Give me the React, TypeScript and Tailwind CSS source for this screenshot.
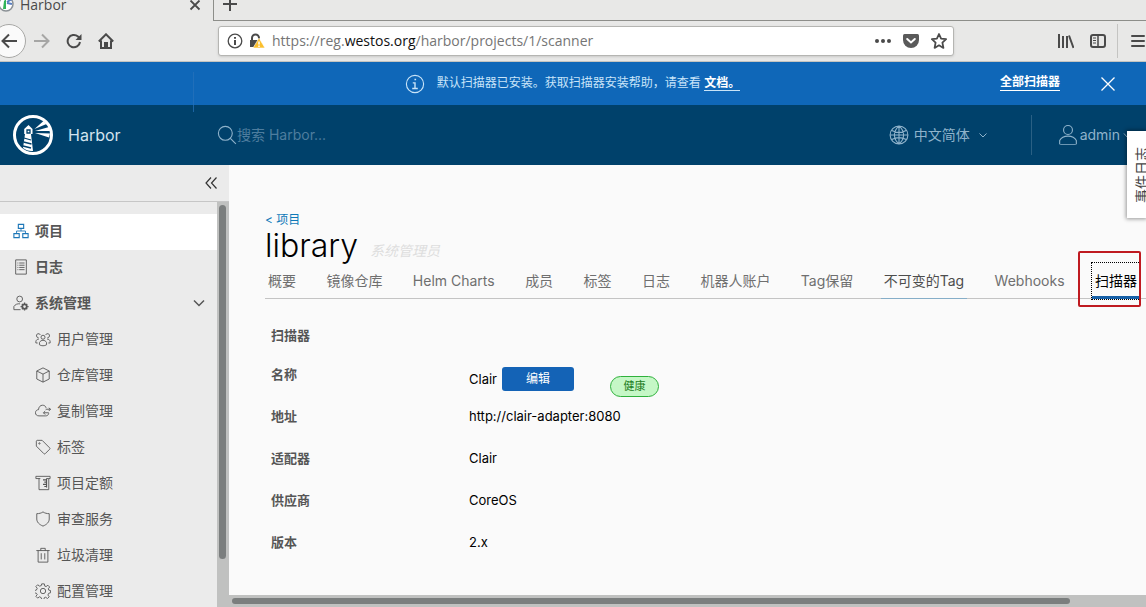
import { useState } from "react";

interface IconProps {
    className?: string;
    children: React.ReactNode;
}

function Icon({ className = "h-4 w-4", children }: IconProps) {
    return (
        <svg xmlns="http://www.w3.org/2000/svg" viewBox="0 0 36 36" fill="none" stroke="currentColor" strokeWidth="2" className={`shrink-0 ${className}`} aria-hidden="true">
            {children}
        </svg>
    );
}

const navIcons = {
    projects: (
        <>
            <path d="M12 3h12v9H12zM2 24h12v9H2zM22 24h12v9H22z" strokeWidth="2.5" />
            <path d="M18 12v6M8 24v-6h20v6" />
        </>
    ),
    logs: (
        <>
            <path d="M6 2h24v32H6z" />
            <path d="M10 9h2M14 9h12M10 14h2M14 14h12M10 19h2M14 19h12M10 24h2M14 24h12" />
        </>
    ),
    admin: (
        <>
            <circle cx="15" cy="9" r="6.5" />
            <path d="M17 33H2v-7c3-5 8-7 14-6" />
            <circle cx="26" cy="26" r="5" strokeWidth="4" />
            <path d="M26 17v3M26 32v3M17 26h3M32 26h3M20 20l2 2M30 30l2 2M32 20l-2 2M22 30l-2 2" strokeWidth="3" />
        </>
    ),
    users: (
        <>
            <circle cx="18" cy="14" r="4.5" />
            <path d="M10 31v-5c2-4 5-5 8-5s6 1 8 5v5c-5 3-11 3-16 0z" />
            <path d="M12 9a4.500 4.500 0 1 0-4 6M24 9a4.500 4.500 0 1 1 4 6M9 18c-4 0-6 2-7 5v4h4M27 18c4 0 6 2 7 5v4h-4" />
        </>
    ),
    registry: <path d="M18 2l14 7v18l-14 7-14-7V9zM4 9l14 7 14-7M18 16v18" />,
    replication: (
        <>
            <path d="M31 23c-1 4-3 6-7 6H9c-5 0-8-3-8-7s3-7 7-7c0-6 4-10 9-10 4 0 7 2 8 6" />
            <path d="M35 14H24M31 11l4 3-4 4M31 22H19M23 18l-4 4 4 4" />
        </>
    ),
    tag: (
        <>
            <path d="M3 5v11l17 17c1 1 2 1 3 0l10-10c1-1 1-2 0-3L16 3H5C4 3 3 4 3 5z" />
            <circle cx="10" cy="10" r="1.500" />
        </>
    ),
    quota: (
        <>
            <path d="M2 3h32v5h-3v25H9V8H2zM9 8h3M26 8h5" />
            <path d="M26 8v20M18 11h8M21 16h5M18 21h8M21 26h5" strokeWidth="2.5" />
        </>
    ),
    shield: <path d="M18 2c4 3 9 4 14 4v12c0 7-5 12-14 16C9 30 4 25 4 18V6c5 0 10-1 14-4z" />,
    trash: <path d="M3 8h30M7 8v26h22V8M13 8V3h10v5M14 14v14M22 14v14" />,
    settings: (
        <>
            <circle cx="18" cy="18" r="6" />
            <path d="M15 2h6l1 5 3 1 4-3 4 4-3 4 1 3 4 1v5l-4 1-2 4 3 4-4 4-4-3-3 1-1 4h-5l-1-4-4-2-4 3-4-4 3-4-2-3-5-1v-5l5-1 2-4-3-4 4-4 4 3 4-1z" />
        </>
    ),
};

type NavIcon = keyof typeof navIcons;

const adminItems: { label: string; icon: NavIcon }[] = [
    { label: "用户管理", icon: "users" },
    { label: "仓库管理", icon: "registry" },
    { label: "复制管理", icon: "replication" },
    { label: "标签", icon: "tag" },
    { label: "项目定额", icon: "quota" },
    { label: "审查服务", icon: "shield" },
    { label: "垃圾清理", icon: "trash" },
    { label: "配置管理", icon: "settings" },
];

const tabs = ["概要", "镜像仓库", "Helm Charts", "成员", "标签", "日志", "机器人账户", "Tag保留", "不可变的Tag", "Webhooks", "扫描器"];

const details = [
    { label: "地址", value: "http://clair-adapter:8080" },
    { label: "适配器", value: "Clair" },
    { label: "供应商", value: "CoreOS" },
    { label: "版本", value: "2.x" },
];

function BrowserChrome() {
    return (
        <div className="shrink-0 bg-[#e8e8e7] font-['Open_Sans',sans-serif] text-[#4a4a4a]">
            <div className="flex h-[21px]">
                <div className="flex w-[214px] items-start border-r border-[#8d8e8a] pr-3">
                    <svg viewBox="0 0 16 16" className="-ml-0.5 -mt-1 h-4 w-4 shrink-0" aria-hidden="true">
                        <circle cx="8" cy="8" r="7" fill="#fff" stroke="#8b9196" strokeWidth="1.500" />
                        <path d="M6 5l2-2v10H5z" fill="#32b45a" />
                        <path d="M9 6l5-3M9 7l5 1" stroke="#5a7fc0" strokeWidth="2" />
                    </svg>
                    <span className="-mt-[5px] ml-1.5 flex-1 text-sm leading-5">Harbor</span>
                    <button aria-label="Close tab" className="-mt-px">
                        <svg viewBox="0 0 12 12" className="h-3 w-3" stroke="currentColor" strokeWidth="1.800"><path d="M1.500 1.500l9 9M10.500 1.500l-9 9" /></svg>
                    </button>
                </div>
                <div className="flex flex-1 items-start border-b border-[#8d8e8a]">
                    <button aria-label="New tab" className="-mt-1 ml-2">
                        <svg viewBox="0 0 16 16" className="h-4 w-4" stroke="currentColor" strokeWidth="2"><path d="M8 1v14M1 8h14" /></svg>
                    </button>
                </div>
            </div>
            <div className="flex h-[41px] items-center border-b border-[#c4c4c0]">
                <button aria-label="Back" className="-ml-2 flex h-[34px] w-[34px] shrink-0 items-center justify-center rounded-full border border-[#a8a8a6] bg-[#fafafa]">
                    <svg viewBox="0 0 16 16" className="h-4 w-4" fill="none" stroke="currentColor" strokeWidth="2"><path d="M16 8H1.500M8 1.500L1.500 8 8 14.500" /></svg>
                </button>
                <button aria-label="Forward" className="ml-2 text-[#a6a6a5]">
                    <svg viewBox="0 0 16 16" className="h-4 w-4" fill="none" stroke="currentColor" strokeWidth="2"><path d="M0 8h14.500M8 1.500L14.500 8 8 14.500" /></svg>
                </button>
                <button aria-label="Reload" className="ml-4">
                    <svg viewBox="0 0 16 16" className="h-4 w-4" fill="none" stroke="currentColor" strokeWidth="2"><path d="M14 9a6.200 6.200 0 1 1-2-5.500L14 5.500" /><path d="M15.500 1v6h-6z" fill="currentColor" stroke="none" /></svg>
                </button>
                <button aria-label="Home" className="ml-4">
                    <svg viewBox="0 0 16 16" className="h-4 w-4" fill="none" stroke="currentColor" strokeWidth="2"><path d="M.8 8.500L8 1.300l7.200 7.200M3 7.500V15h10V7.500" /><path d="M6 9h4v6H6z" fill="currentColor" stroke="none" /></svg>
                </button>
                <div className="mx-[104px] flex h-[30px] flex-1 items-center rounded-[3px] border border-[#b5b5b2] bg-white pl-2 pr-1.5 shadow-sm">
                    <svg viewBox="0 0 16 16" className="h-4 w-4 shrink-0" fill="none" stroke="currentColor" aria-hidden="true"><circle cx="8" cy="8" r="6.800" strokeWidth="1.300" /><path d="M8 7v5M8 4v1.800" strokeWidth="2" /></svg>
                    <svg viewBox="0 0 16 16" className="ml-1.5 h-4 w-4 shrink-0" aria-hidden="true">
                        <path d="M3 7V5a3.500 3.500 0 0 1 7 0v2" fill="none" stroke="currentColor" strokeWidth="2" />
                        <path d="M1 7h10v7H1z" fill="currentColor" />
                        <path d="M10 5l6 10H4z" fill="#fbbf2d" stroke="#fff" strokeWidth=".6" />
                        <path d="M10 8.500v3M10 12.500V14" stroke="#fff" strokeWidth="1.500" />
                    </svg>
                    <span className="ml-[7px] flex-1 truncate text-sm text-[#757575]">
                        https://reg.<span className="text-[#111]">westos.org</span>/harbor/projects/1/scanner
                    </span>
                    <button aria-label="Page actions">
                        <svg viewBox="0 0 16 16" className="h-4 w-4" fill="currentColor"><circle cx="2" cy="8" r="2" /><circle cx="8" cy="8" r="2" /><circle cx="14" cy="8" r="2" /></svg>
                    </button>
                    <button aria-label="Pocket" className="ml-3">
                        <svg viewBox="0 0 16 16" className="h-4 w-4"><path d="M1.500 1h13Q16 1 16 2.500V7A8 8 0 0 1 0 7V2.500Q0 1 1.500 1z" fill="#5a5a5a" /><path d="M4.200 6L8 9.500 11.800 6" fill="none" stroke="#fff" strokeWidth="2" strokeLinecap="round" /></svg>
                    </button>
                    <button aria-label="Bookmark" className="ml-3">
                        <svg viewBox="0 0 16 16" className="h-4 w-4" fill="none" stroke="currentColor" strokeWidth="1.800" strokeLinejoin="round"><path d="M8 1l2.100 4.700 5 .5-3.700 3.500 1 5.200L8 12.300l-4.400 2.600 1-5.200L.9 6.200l5-.5z" /></svg>
                    </button>
                </div>
                <button aria-label="Library">
                    <svg viewBox="0 0 16 16" className="h-4 w-4" fill="none" stroke="currentColor" strokeWidth="2"><path d="M1 1v14M5 3v12M9 3v12M11 2.500L15.500 15" /></svg>
                </button>
                <button aria-label="Sidebars" className="ml-4">
                    <svg viewBox="0 0 16 16" className="h-4 w-4" fill="none" stroke="currentColor"><rect x="1" y="2" width="14" height="12" rx="2" strokeWidth="2" /><path d="M8 2v12" strokeWidth="1.500" /><path d="M3 5h3M3 7.500h3M3 10h3" /></svg>
                </button>
                <div className="ml-[11px] h-[34px] w-px bg-[#c4c4c2]"></div>
                <button aria-label="Menu" className="ml-3">
                    <svg viewBox="0 0 16 16" className="h-4 w-4" stroke="currentColor" strokeWidth="2" strokeLinecap="round"><path d="M2 3h12M2 8h12M2 13h12" /></svg>
                </button>
            </div>
        </div>
    );
}

function Banner() {
    return (
        <div className="relative flex h-[43px] shrink-0 items-center bg-[#0f67b8] pb-0.5 text-xs text-[#c9e4f8]">
            <div className="flex flex-1 items-center justify-center pl-[145px]">
                <Icon className="mt-0.5 h-5 w-5"><circle cx="18" cy="18" r="15.500" /><path d="M14 16h4v10M13 26h10M17 10h3" strokeWidth="2.500" /></Icon>
                <p className="ml-3">
                    默认扫描器已安装。获取扫描器安装帮助，请查看{" "}
                    <a href="#docs" className="border-b border-[#c9e4f8] font-bold text-white">文档。</a>
                </p>
            </div>
            <a href="#scanners" className="mr-10 border-b border-white font-bold leading-4 text-white">全部扫描器</a>
            <button aria-label="关闭" className="mr-[30px] mt-0.5 text-white">
                <svg viewBox="0 0 16 16" className="h-4 w-4" stroke="currentColor" strokeWidth="1.300"><path d="M1.500 1.500l13 13M14.500 1.500l-13 13" /></svg>
            </button>
            <div className="absolute left-[193px] top-2.5 h-10 w-px bg-[#2873bb]/70"></div>
        </div>
    );
}

function Header() {
    return (
        <header className="flex h-[60px] shrink-0 items-center bg-[#00416b] text-sm text-[#8fb3cb]">
            <svg viewBox="0 0 40 40" className="ml-[13px] h-10 w-10 shrink-0" aria-hidden="true">
                <circle cx="20" cy="20" r="18.500" fill="none" stroke="#fff" strokeWidth="3" />
                <path d="M15.500 10l4 4v5h-1.500l2 17c-4 .5-7-1-10-3l2-14h-.8v-5z" fill="#fff" />
                <path d="M14 15h3v3h-3zM11 23l7 2M10.500 27l8 2M10 31l8 2" fill="none" stroke="#00416b" strokeWidth="1.300" />
                <path d="M21.500 14l9-8 3 3zM22 16l14-4 1 4zM22 18l15 .5-1 4z" fill="#fff" />
            </svg>
            <span className="ml-[15px] w-[149px] text-base text-[#d3e3ee]">Harbor</span>
            <label className="flex flex-1 items-center">
                <Icon className="h-5 w-5"><circle cx="15" cy="15" r="12.500" /><path d="M24 24l10 10" /></Icon>
                <input type="text" aria-label="搜索" placeholder="搜索 Harbor..." className="w-full bg-transparent outline-none placeholder:text-[#4e7d9e]" />
            </label>
            <button className="flex items-center">
                <Icon className="h-5 w-5"><circle cx="18" cy="18" r="16" /><path d="M18 2v32M2 18h32M5 10c8 4 18 4 26 0M5 26c8-4 18-4 26 0M18 2c-11 9-11 23 0 32M18 2c11 9 11 23 0 32" /></Icon>
                <span className="ml-[5px]">中文简体</span>
                <svg viewBox="0 0 10 10" className="ml-2 h-2.5 w-2.5" fill="none" stroke="currentColor"><path d="M1.500 3.500L5 7l3.500-3.500" /></svg>
            </button>
            <div className="ml-[43px] h-10 w-px bg-[#2a6084]"></div>
            <button className="ml-[26px] mr-4 flex items-center">
                <Icon className="h-5 w-5"><circle cx="18" cy="9" r="8" /><path d="M3 34v-6c3-6 9-8 15-8s12 2 15 8v6c0 1-30 1-30 0z" /></Icon>
                <span className="ml-0.5">admin</span>
                <svg viewBox="0 0 10 10" className="h-2.5 w-2.5" fill="none" stroke="currentColor"><path d="M4 3.500L7 7l3-3.500" /></svg>
            </button>
        </header>
    );
}

function Sidebar() {
    const [open, setOpen] = useState(true);

    return (
        <aside className="flex w-[229px] shrink-0 flex-col bg-[#ebebeb] text-sm text-[#565656]">
            <div className="flex h-[37px] shrink-0 items-center justify-end border-b border-[#c6c6c6] pr-3 text-[#333]">
                <button aria-label="折叠">
                    <svg viewBox="0 0 12 12" className="h-3 w-3" fill="none" stroke="currentColor" strokeWidth="1.200"><path d="M6 .5L1 6l5 5.500M11.500 .5L6.500 6l5 5.500" /></svg>
                </button>
            </div>
            <div className="flex min-h-0 flex-1">
                <nav className="flex-1 overflow-hidden pt-3">
                    <a href="#projects" className="flex h-9 items-center bg-white pb-0.5 pl-[13px] font-bold">
                        <Icon className="mr-1.5 h-4 w-4 text-[#1d77b8]">{navIcons.projects}</Icon>项目
                    </a>
                    <a href="#logs" className="flex h-9 items-center pb-0.5 pl-[13px] font-bold">
                        <Icon className="mr-1.5 h-4 w-4">{navIcons.logs}</Icon>日志
                    </a>
                    <button onClick={() => setOpen(!open)} aria-expanded={open} className="flex h-9 w-full items-center pb-0.5 pl-[13px] pr-3 font-bold">
                        <Icon className="mr-1.5 h-4 w-4">{navIcons.admin}</Icon>系统管理
                        <svg viewBox="0 0 12 12" className="ml-auto h-3 w-3" fill="none" stroke="currentColor" strokeWidth="1.500"><path d="M1 3.500l5 5 5-5" /></svg>
                    </button>
                    {open && adminItems.map((item) => (
                        <a key={item.label} href={`#${item.icon}`} className="flex h-9 items-center pb-0.5 pl-[35px]">
                            <Icon className="mr-1.5 h-4 w-4">{navIcons[item.icon]}</Icon>{item.label}
                        </a>
                    ))}
                </nav>
                <div className="w-3 shrink-0 bg-[#c0c1c0] px-0.5 pt-[3px]">
                    <div className="h-[88%] w-[7px] rounded-full bg-[#7b7e7e]"></div>
                </div>
            </div>
        </aside>
    );
}

function TabBar() {
    const [active, setActive] = useState("扫描器");

    return (
        <div role="tablist" className="flex h-9 justify-between border-b border-[#c4c4c4] pr-1.5 text-sm text-[#6f6f6f]">
            {tabs.map((tab) => {
                const isActive = tab === active;
                const isHovered = tab === "不可变的Tag";
                return (
                    <button
                        key={tab}
                        role="tab"
                        aria-selected={isActive}
                        onClick={() => setActive(tab)}
                        className={`relative h-9 shrink-0 whitespace-nowrap px-[3px] ${isActive ? "border-b-[3px] border-[#1761a8] pt-[3px] text-black outline-1 outline-dotted outline-black" : ""} ${isHovered ? "border-b border-[#86aec8] text-[#4d4d4d]" : ""}`}
                    >
                        {tab}
                        {isActive && <span className="absolute -left-3.5 -right-px -top-3 h-14 rounded-xs border-2 border-[#bf1a20]"></span>}
                    </button>
                );
            })}
        </div>
    );
}

function ScannerDetails() {
    return (
        <dl className="mt-[26px] grid grid-cols-[198px_1fr] px-1.5 text-[13px] leading-5">
            <dt className="col-span-2 h-[39px] font-bold text-[#565656]">扫描器</dt>
            <dt className="h-[42px] font-bold text-[#565656]">名称</dt>
            <dd className="flex h-[42px] items-start pt-[3px] text-black">
                <span className="mt-0.5">Clair</span>
                <button className="ml-[5px] h-6 w-[72px] rounded-[3px] bg-[#1463b6] text-xs text-white">编辑</button>
                <span className="ml-9 mt-[9px] h-[21px] w-[49px] rounded-full border border-[#2fb13c] bg-[#c5f7c6] text-center text-[11px] leading-[19px] text-[#1d7d22]">健康</span>
            </dd>
            {details.map(({ label, value }) => (
                <div key={label} className="contents">
                    <dt className="h-[42px] font-bold text-[#565656]">{label}</dt>
                    <dd className="h-[42px] text-black">{value}</dd>
                </div>
            ))}
        </dl>
    );
}

export default function App() {
    return (
        <div className="relative flex h-screen flex-col overflow-hidden bg-[#fafafa] font-['Inter','Noto_Sans_CJK_SC',sans-serif]">
            <BrowserChrome />
            <Banner />
            <Header />
            <div className="flex min-h-0 flex-1">
                <Sidebar />
                <div className="flex min-w-0 flex-1 flex-col">
                    <main className="flex-1 overflow-hidden pl-9 pt-[47px]">
                        <a href="#projects" className="block text-xs leading-4 text-[#0f79b8]">&lt; 项目</a>
                        <div className="flex h-[35px] items-center">
                            <h1 className="text-[32px] font-light leading-8 text-black">library</h1>
                            <span className="ml-3 mt-2.5 text-sm italic text-[#dedede]">系统管理员</span>
                        </div>
                        <TabBar />
                        <ScannerDetails />
                    </main>
                    <div className="h-3 shrink-0 bg-[#c0c1c0] px-[3px] pt-[3px]">
                        <div className="h-[6px] w-[92%] rounded-full bg-[#7b7e7e]"></div>
                    </div>
                </div>
            </div>
            <button className="absolute right-0 top-[131px] flex h-[87px] w-[19px] items-center justify-center bg-white text-sm text-[#444] shadow-[0_0_4px_1px_rgba(0,0,0,0.4)]">
                <span className="ml-2.5 rotate-180 whitespace-nowrap leading-4 [text-orientation:sideways] [writing-mode:vertical-rl]">事件日志</span>
            </button>
        </div>
    );
}
